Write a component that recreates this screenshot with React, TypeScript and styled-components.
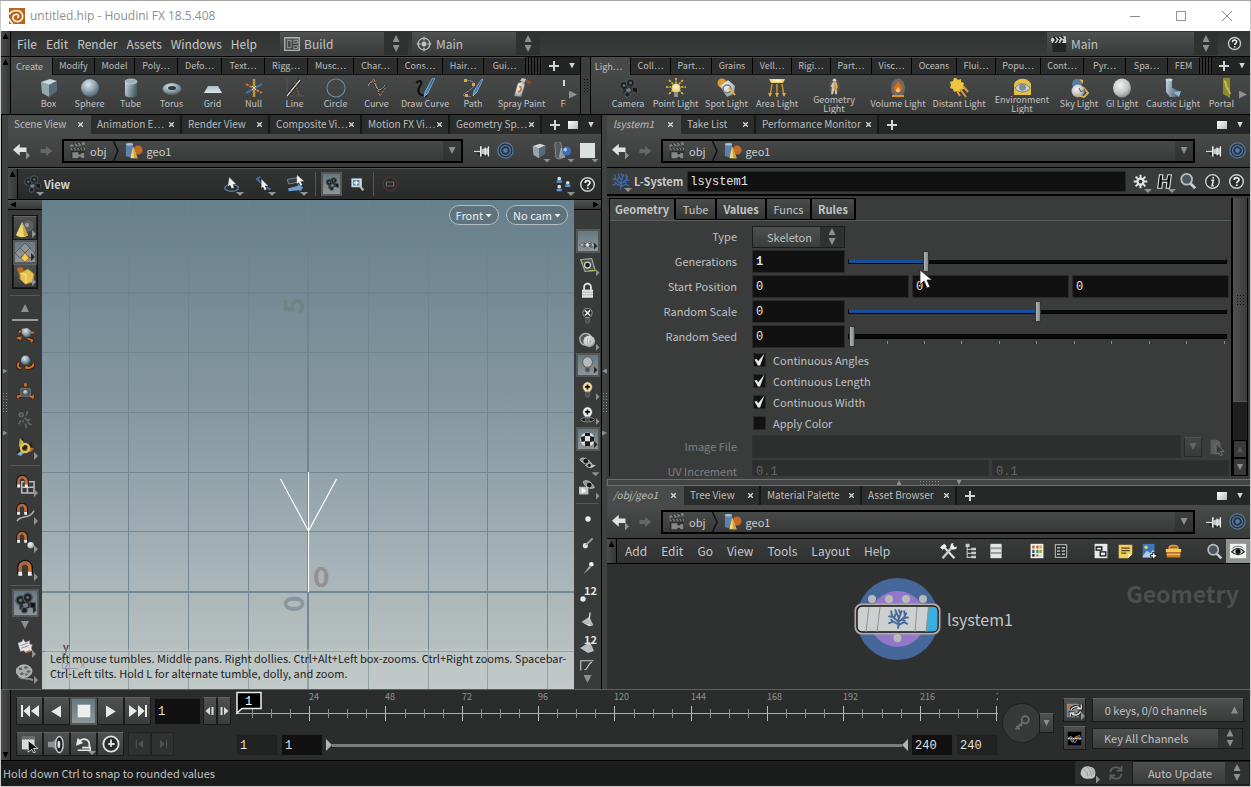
import React from 'react';
import styled, { createGlobalStyle, css } from 'styled-components';

const Global = createGlobalStyle`
  * { box-sizing: border-box; }
  body {
    margin: 0;
    background: #c9c9c9;
    color: #bfc1c1;
    font-family: 'Noto Sans CJK SC', 'Noto Sans', sans-serif;
    font-size: 11px;
    line-height: 14px;
  }
  button, input, select {
    font: inherit;
    color: inherit;
    margin: 0;
    padding: 0;
    border: 0;
    border-radius: 0;
    outline: 0;
    background: none;
  }
  svg { display: block; flex: none; }
`;

/* ---------- icons ---------- */

const HiddenDefs = styled.svg`
  position: absolute;
  width: 0;
  height: 0;
`;

const Defs = () => (
  <HiddenDefs aria-hidden="true">
    <defs>
      <radialGradient id="ball" cx="0.4" cy="0.3" r="0.75">
        <stop offset="0" stopColor="#dbe6ec" />
        <stop offset="0.5" stopColor="#93a7b1" />
        <stop offset="1" stopColor="#465660" />
      </radialGradient>
      <radialGradient id="white" cx="0.4" cy="0.35" r="0.75">
        <stop offset="0" stopColor="#f2f3f3" />
        <stop offset="0.6" stopColor="#c2c5c5" />
        <stop offset="1" stopColor="#70777a" />
      </radialGradient>
      <linearGradient id="steel" x1="0" y1="0" x2="1" y2="0.3">
        <stop offset="0" stopColor="#c8d8e0" />
        <stop offset="0.5" stopColor="#8a9ea8" />
        <stop offset="1" stopColor="#4c5d66" />
      </linearGradient>
      <linearGradient id="plate" x1="0" y1="0" x2="0" y2="1">
        <stop offset="0" stopColor="#aebdc4" />
        <stop offset="1" stopColor="#dfe6ea" />
      </linearGradient>
      <radialGradient id="lamp" cx="0.5" cy="0.4" r="0.6">
        <stop offset="0" stopColor="#fffbe0" />
        <stop offset="1" stopColor="#e9c64c" />
      </radialGradient>
      <linearGradient id="blue" x1="0" y1="0" x2="1" y2="0">
        <stop offset="0" stopColor="#5a9bd5" />
        <stop offset="1" stopColor="#1c4e86" />
      </linearGradient>
      <linearGradient id="sky" x1="0" y1="0" x2="0" y2="1">
        <stop offset="0" stopColor="#66808c" />
        <stop offset="0.45" stopColor="#8799a1" />
        <stop offset="0.75" stopColor="#a6b3b9" />
        <stop offset="0.8" stopColor="#acb7b9" />
        <stop offset="1" stopColor="#bdc6c4" />
      </linearGradient>
    </defs>
  </HiddenDefs>
);

const magnet = (
  <>
    <path d="M3 15V8a5.500 5.500 0 0 1 11 0v7" fill="none" stroke="#15100d" strokeWidth="5.500" />
    <path d="M3.500 13V8a5 5 0 0 1 10 0v5" fill="none" stroke="#a8664a" strokeWidth="4" />
    <path d="M11 4.500a5 5 0 0 1 2.500 4V12" fill="none" stroke="#d26f1c" strokeWidth="2.500" />
    <path d="M1.500 12.500h4v4h-4zM11.500 12.500h4v4h-4z" fill="#f2f2f2" />
  </>
);

const camera = (
  <>
    <circle cx="6" cy="7.500" r="4.200" fill="#1d2123" stroke="#4d5558" strokeWidth="1.200" />
    <circle cx="12.500" cy="5" r="4" fill="#1d2123" stroke="#4d5558" strokeWidth="1.200" />
    <circle cx="6" cy="7.500" r="1.500" fill="#5f6a6f" />
    <circle cx="12.500" cy="5" r="1.400" fill="#5f6a6f" />
    <path d="M5 11l8-3 3 5-7 4-4-1z" fill="#2b3134" />
    <path d="M8 11l4-1 1 3-4 2z" fill="#71808a" />
    <path d="M14 9l5.500 1v5l-4.500-1z" fill="#131617" stroke="#454c4f" />
    <circle cx="9.500" cy="16.500" r="2.700" fill="#1d2123" stroke="#596164" />
  </>
);

const tree = (color: string, w: number) => (
  <g fill="none" stroke={color} strokeWidth={w} strokeLinecap="round">
    <path d="M9.500 19c1-3 1-5 .5-9M10 11l3-8M10 9L7 2M9.800 13L4 8 3 3M4.500 8.300L1 8M10.300 13l5-4 2-4M14.500 9.500l4.500-.5M9.800 15.500L5 13l-4 1.500M5 13l-2-2M10.300 16l5-2.500 3 1.500M12 5.500L10.500 2M16 7l-.5-4M6 9.500L7 6M13 11l3 1" />
  </g>
);

const bulb = (fill: string, inner?: React.ReactNode) => (
  <>
    <path d="M10 1a6 6 0 0 1 5.800 6c0 2.500-1.800 4-2.600 6H6.800C6 11 4.200 9.500 4.200 7A6 6 0 0 1 10 1z" fill={fill} stroke="#3c3f40" strokeWidth="0.800" />
    <path d="M7.500 13.500h5v3.500a2.500 2 0 0 1-5 0z" fill="#4d5253" stroke="#6c7273" strokeWidth="0.800" />
    {inner}
  </>
);

const limb = (d: string) => (
  <>
    <path d={d} fill="none" stroke="#3a120b" strokeWidth="4" strokeLinejoin="round" />
    <path d={d} fill="none" stroke="#c86f28" strokeWidth="2.200" />
  </>
);

const icons: Record<string, React.ReactNode> = {
  box: (
    <>
      <path d="M2 4l9-3 7 2-8 4z" fill="#c9d8df" />
      <path d="M2 4l8 3v12l-7-4z" fill="#94a7b0" />
      <path d="M10 7l8-4v10l-8 6z" fill="#586a74" />
    </>
  ),
  sphere: <circle cx="10" cy="10" r="9" fill="url(#ball)" />,
  tube: (
    <>
      <path d="M4 3v14a6 2.500 0 0 0 12 0V3z" fill="url(#steel)" />
      <ellipse cx="10" cy="3.500" rx="6" ry="2.500" fill="#9fb1ba" stroke="#d5e0e6" strokeWidth="0.600" />
    </>
  ),
  torus: (
    <>
      <ellipse cx="10" cy="11" rx="9.500" ry="6" fill="url(#ball)" />
      <ellipse cx="10" cy="10" rx="4" ry="2" fill="#30383c" />
    </>
  ),
  grid: <path d="M5 8h10l4 7H1z" fill="url(#plate)" />,
  nul: (
    <>
      <path d="M10 1v18" stroke="#b89a3b" strokeWidth="2.500" />
      <path d="M2 15l16-9" stroke="#3f76b5" strokeWidth="2" />
      <path d="M2 6l16 9" stroke="#d27a3c" strokeWidth="1.800" strokeDasharray="3 1" />
      <path d="M8 8l4 4M12 8l-4 4" stroke="#e8d080" />
    </>
  ),
  line: (
    <>
      <path d="M2 1v17h17" fill="none" stroke="#5c5f60" strokeWidth="0.800" />
      <path d="M2 18L15 2" stroke="#15181a" strokeWidth="3.500" />
      <path d="M2 18L15 2" stroke="#d8dada" strokeWidth="1.300" />
      <path d="M5 13l5 2M10 4l4 13" stroke="#b66c33" strokeDasharray="1.500 1.500" />
    </>
  ),
  circle: <circle cx="10" cy="10" r="9" fill="none" stroke="#6b8fae" strokeWidth="1.100" />,
  curve: (
    <>
      <path d="M1 7C4 2 7 3 9 8s5 5 9-1" fill="none" stroke="#14181a" strokeWidth="2" />
      <path d="M1 8l6-7 6 17 6-9" fill="none" stroke="#c98a4a" strokeDasharray="2 1.500" />
      <path d="M1 7C4 2 7 3 9 8s5 5 9-1" fill="none" stroke="#d5d8d8" strokeWidth="0.800" />
    </>
  ),
  drawCurve: (
    <>
      <path d="M1 5c5-4 7-1 4 3s-3 10 7 10" fill="none" stroke="#0d0f10" strokeWidth="2" />
      <path d="M20 0l-3 1-7 13-1 5 4-4z" fill="url(#blue)" stroke="#a9cfee" strokeWidth="0.600" />
    </>
  ),
  path: (
    <>
      <path d="M2 2c14 1 10 7 2 12s-3 3 4 5" fill="none" stroke="#8a9092" strokeWidth="0.900" />
      <path d="M1 1h3v3H1zM9 5h3v3H9zM2 16h3v3H2z" fill="#e2a33c" />
      <path d="M20 1l-2 1-7 11-1 5 4-4z" fill="url(#blue)" stroke="#a9cfee" strokeWidth="0.600" />
    </>
  ),
  spray: (
    <>
      <path d="M6 5l6-2 1 4-4 12-7-1z" fill="url(#white)" stroke="#606060" strokeWidth="0.500" />
      <path d="M8 3l2-3 4 1-1 3z" fill="#c9c9c9" />
      <path d="M13 2l2-1 5 4-4 1z" fill="#9b4a28" />
      <path d="M7 9c3-2 3 5-1 5" fill="none" stroke="#d3642b" strokeWidth="1.500" />
    </>
  ),
  clipped: <path d="M3 2h2v6H3z" fill="#d8d8d8" />,
  camera,
  pointLight: (
    <>
      <path d="M10 0v5M0 9h5M15 9h5M3 2l4 4M17 2l-4 4M3 16l4-4M17 16l-4-4" stroke="#e8bd2f" strokeWidth="1.600" strokeDasharray="2.500 1" />
      <circle cx="10" cy="10" r="4.500" fill="url(#lamp)" />
      <path d="M8 14h4v5H8z" fill="#8a8f92" />
    </>
  ),
  spotLight: (
    <>
      <circle cx="5" cy="5" r="4.500" fill="#dc9a2a" />
      <path d="M3 8l8-6 7 6-1 8-7 3z" fill="url(#white)" />
      <circle cx="10" cy="11" r="4" fill="none" stroke="#6d7477" strokeWidth="1.500" />
      <path d="M12 10l6 7" stroke="#e6b23c" strokeWidth="1.800" />
    </>
  ),
  areaLight: (
    <>
      <path d="M2 1h16l-2 4H4z" fill="url(#lamp)" />
      <path d="M5 6L3 18M10 6v13M15 6l2 12" stroke="#c8922b" strokeWidth="1.500" />
      <path d="M1 15l2 4 2-4zM8 15l2 4 2-4zM15 15l2 4 2-4z" fill="#e0ab3c" />
    </>
  ),
  geometryLight: (
    <>
      <ellipse cx="10" cy="10" rx="6" ry="9.500" fill="#6b6152" opacity="0.600" />
      <circle cx="10" cy="2.500" r="2" fill="#d9d6cc" />
      <path d="M8 5h4l2 6-1.500 1 .5 7h-2l-1-6-2 6H6l1-8-1.500-1z" fill="#cbc8be" />
      <path d="M10 5l3 5-2 6-2-5z" fill="#e3962d" />
    </>
  ),
  volumeLight: (
    <>
      <ellipse cx="10" cy="10" rx="7" ry="9.500" fill="#70685f" />
      <path d="M10 2c0 4 5 5 4 10a4.500 4.500 0 0 1-8 0C5 8 9 7 10 2z" fill="#d96a1e" />
      <path d="M10 8c0 2 2.500 3 2 5a2.200 2.200 0 0 1-4 0c-.5-2 2-2 2-5z" fill="#f7d25c" />
      <path d="M4 17h12v2H4z" fill="#dc9333" />
    </>
  ),
  distantLight: (
    <>
      <path d="M7 0l2 2 3-1 0 3 3 1-1 3 1 3-3 1-1 2-3-1-3 1-1-3-3-1 1-3-1-3 3-1 1-3z" fill="#ecc63d" />
      <path d="M11 11l6 8M14 8l5 6M8 13l3 5" stroke="#d99a30" strokeWidth="2" />
    </>
  ),
  envLight: (
    <>
      <path d="M-1 11a11 10 0 0 1 22 0v9H-1z" fill="#e3bf45" />
      <path d="M1 12c5-7 13-7 18 0-5 6-13 6-18 0z" fill="#c9d0d2" stroke="#6d7477" />
      <circle cx="10" cy="11" r="4" fill="#7d8b92" />
    </>
  ),
  skyLight: (
    <>
      <circle cx="8" cy="6" r="5" fill="#557f9f" />
      <path d="M10 1l4 1 0 4z" fill="#e8b53b" />
      <circle cx="9" cy="13" r="6.500" fill="url(#white)" />
      <path d="M14 9l5 6-4 4-8-2" fill="none" stroke="#e0b454" strokeWidth="1.800" />
      <path d="M10 10l2 4 4-3" fill="none" stroke="#555" />
    </>
  ),
  giLight: <ellipse cx="10" cy="10" rx="9" ry="9.500" fill="url(#white)" />,
  causticLight: (
    <>
      <path d="M3 1h6v9l8 3-1 6-9 0-4-5z" fill="url(#steel)" />
      <ellipse cx="6" cy="1.800" rx="3.500" ry="1.300" fill="#c8d8e0" />
      <path d="M10 14l8-1-2 6z" fill="#8cbbe0" />
    </>
  ),
  portalLight: (
    <>
      <path d="M0 0h7v20l-7-4z" fill="#8a8c2e" />
      <path d="M1 3c4 2 0 6 4 8l2 5" fill="none" stroke="#d0b93c" strokeWidth="2" />
    </>
  ),
  layout: (
    <g fill="none" stroke="#b4b6b6" strokeWidth="1.500">
      <path d="M2 3h16v14H2z" />
      <path d="M5 6h4v8H5zM12 6h4v3h-4zM12 12h4v3h-4z" stroke="#8e9090" strokeWidth="1.200" />
    </g>
  ),
  desktop: (
    <>
      <circle cx="10" cy="10" r="6.500" fill="none" stroke="#b9bbbb" strokeWidth="1.500" />
      <circle cx="10" cy="10" r="2.800" fill="#c4c6c6" />
      <path d="M10 2v4M10 14v4M2 10h4M14 10h4" stroke="#b9bbbb" strokeWidth="1.500" />
    </>
  ),
  clapper: (
    <>
      <path d="M2 9h17v11H2z" fill="#2c2d2d" />
      <path d="M1 6l1-3L18 0l1 3-9 2H6z" fill="#7e8181" />
      <path d="M2 7h17v3H2z" fill="#767979" />
      <path d="M5 2l2 3M9 1l2 3M13 0l2 3M4 7l2 3M8 7l2 3M12 7l2 3M16 7l1 3" stroke="#2a2b2b" strokeWidth="1.500" />
      <path d="M4 12h7v2l2 1 2-2h3v6h-3l-2-2-2 1v1H4z" fill="#858888" />
    </>
  ),
  clapperBright: (
    <>
      <path d="M2 8h16v11H3z" fill="#232424" />
      <path d="M1 6l1-3L17 1l1 3-1 1h1v4H2V7z" fill="#d0d2d2" />
      <path d="M4 2l3 4M8 2l3 3M12 1l3 3M4 9l2-3M8 9l2-3M12 9l2-3" stroke="#161717" strokeWidth="1.800" />
    </>
  ),
  geo: (
    <>
      <path d="M1 2h8v13a4 2 0 0 1-8-1z" fill="#5d81a8" />
      <ellipse cx="5" cy="2.500" rx="4" ry="1.500" fill="#a3bfd8" />
      <circle cx="14.500" cy="9" r="5" fill="#c46c27" />
      <path d="M9 5l5 13H6z" fill="#f1d777" />
      <path d="M9 5l5 13h-4z" fill="#d3a23e" />
    </>
  ),
  back: <path d="M0 9l9-8v5h9v6H9v5z" fill="#dfe3e3" />,
  forward: <path d="M19 10l-9-7v4H2v6h8v4z" fill="#646767" />,
  pin: (
    <>
      <path d="M0 10.500h9" stroke="#e0e4e4" strokeWidth="1.300" />
      <path d="M4 13c3 2 7 3 13 3" fill="none" stroke="#202121" strokeWidth="2" />
      <path d="M8.500 4v13" stroke="#e9ecec" strokeWidth="2" />
      <path d="M9 8l5-1.500h4v8h-4L9 13z" fill="#bfc4c4" />
      <path d="M14 5.500v10M18 4v13" stroke="#e9ecec" strokeWidth="1.600" />
    </>
  ),
  target: (
    <>
      <circle cx="10" cy="10" r="9" fill="#27333f" stroke="#56789a" strokeWidth="1.500" />
      <circle cx="10" cy="10" r="5.800" fill="#27333f" stroke="#56789a" strokeWidth="1.500" />
      <circle cx="10" cy="10" r="2.800" fill="#4a7cb0" />
    </>
  ),
  shapes: (
    <>
      <path d="M1 3a3 3 0 0 1 7 0l2 11a4 3 0 0 1-8 3z" fill="#55595b" stroke="#8d9294" />
      <path d="M8 7l4 10H6z" fill="#8d9294" stroke="#ccd0d0" strokeWidth="0.600" />
      <circle cx="14" cy="10" r="5" fill="#3c6fae" />
      <circle cx="12.500" cy="8.500" r="2" fill="#a9c8ea" />
    </>
  ),
  help: (
    <>
      <circle cx="10" cy="10" r="8" fill="#2a2c2c" stroke="#c9cccc" strokeWidth="1.800" />
      <path d="M7.300 8.200c0-3.800 5.600-3.500 5.600-.4 0 2-2.600 2.200-2.600 4.200M10.300 13.500v1.900" fill="none" stroke="#f0f2f2" strokeWidth="2.100" />
    </>
  ),
  info: (
    <>
      <circle cx="10" cy="10" r="8" fill="#2f3131" stroke="#d6d9d9" strokeWidth="1.500" />
      <path d="M8.500 8.500h2.500l-1.500 6.500h2M11 4.500l-.3 2" fill="none" stroke="#e6e8e8" strokeWidth="1.800" />
    </>
  ),
  search: (
    <>
      <path d="M12 12l6 6" stroke="#cdd0d0" strokeWidth="3" />
      <circle cx="8.500" cy="8" r="6" fill="#4b5660" stroke="#b9bcbc" strokeWidth="2" />
    </>
  ),
  gear: (
    <>
      <path d="M10 1v18M1 10h18M3.500 3.500l13 13M16.500 3.500l-13 13" stroke="#e3e5e5" strokeWidth="2.600" />
      <circle cx="10" cy="10" r="5.500" fill="#e3e5e5" />
      <circle cx="10" cy="10" r="2.500" fill="#333" />
    </>
  ),
  hLetter: (
    <path d="M4 2h4l-.5 6h5L14 2h4l-2 16h-4l.8-7H7.500L7 18H2z" fill="#111" stroke="#dfe1e1" strokeWidth="1.300" />
  ),
  tree: tree('#3f6cab', 1.400),
  rotateTool: (
    <>
      <ellipse cx="9" cy="14" rx="8" ry="4" fill="none" stroke="#5f87ad" strokeWidth="1.500" />
      <path d="M6 1l9 9-4 0 1 4-3 1-2-4-3 2z" fill="#eceeee" stroke="#111" strokeWidth="0.600" />
    </>
  ),
  moveTool: (
    <>
      <path d="M1 3l6 6M12 13l5 3" stroke="#3d6fa8" strokeWidth="2.500" />
      <path d="M0 4l5-3" stroke="#3d6fa8" strokeWidth="2" />
      <path d="M6 3l9 9-4 0 2 4-3 1-2-4-2 2z" fill="#eceeee" stroke="#111" strokeWidth="0.600" />
    </>
  ),
  zoomTool: (
    <>
      <path d="M0 5l11-2 1 5-10 2z" fill="#3c3f40" stroke="#999" strokeWidth="0.800" />
      <path d="M1 15l11-3v-2l6 4-4 5v-2l-12 1z" fill="#6c9cc8" />
      <path d="M11 0l8 7-4 0 2 4-2 1-2-4-2 2z" fill="#eceeee" />
    </>
  ),
  boxZoom: (
    <>
      <path d="M3 3h13v11H3z" fill="#d7dadb" />
      <path d="M5 5h8v7H5z" fill="#4d8bbd" />
      <path d="M9 5.500v6M6 8.500h6" stroke="#fff" strokeWidth="1.500" />
      <path d="M13 12l5 6" stroke="#c3c6c6" strokeWidth="2.500" />
    </>
  ),
  noEntry: (
    <>
      <circle cx="10" cy="10" r="8.500" fill="#2d2828" stroke="#4d3432" strokeWidth="2" />
      <path d="M5.500 7.500h9v5h-9z" fill="none" stroke="#686868" strokeWidth="1.500" />
    </>
  ),
  tiles: (
    <>
      <circle cx="5" cy="3" r="2.200" fill="#cdd9e4" />
      <path d="M2 5h6v3H2z" fill="#5b93d0" />
      <circle cx="5" cy="12.500" r="2.200" fill="#cdd9e4" />
      <path d="M2 15h6v3H2z" fill="#5b93d0" />
      <circle cx="15" cy="8" r="2.200" fill="#cdd9e4" />
      <path d="M12 10h6v3h-6z" fill="#5b93d0" />
    </>
  ),
  selObject: (
    <>
      <circle cx="13" cy="8" r="5.500" fill="#5e6163" />
      <circle cx="12" cy="7" r="2" fill="#9a9d9e" />
      <path d="M7 4l6 13c-3 3-9 3-12 0z" fill="#ecd774" />
      <path d="M7 4l6 13-4 1z" fill="#c9a23a" />
    </>
  ),
  selComponent: (
    <>
      <path d="M10 1l5 5-5 5-5-5zM5 6l5 5-5 5-5-5zM15 6l5 5-5 5-5-5z" fill="#8d9294" stroke="#585d60" />
      <path d="M10 11l4 5-4 4-4-4z" fill="#f5d04a" stroke="#c06a1e" />
    </>
  ),
  selDynamic: (
    <>
      <path d="M2 2l5-1 2 4-5 4z" fill="#c46a26" />
      <path d="M5 7l8-4 6 5-1 8-8 2-5-5z" fill="#e5c353" stroke="#a8892a" />
      <path d="M5 7l6 2 0 9" fill="none" stroke="#fae58f" />
    </>
  ),
  handleTransform: (
    <>
      {limb('M5 5L3 7M15 7h4M1 13l5-1M2 12l3 2M12 13l5 2-1 2')}
      <path d="M6 3l6-1 4 3-1 6-5 1-4-4z" fill="url(#ball)" />
    </>
  ),
  handleRotate: (
    <>
      {limb('M3 9c-2 3-1 6 2 6M18 10c1 3-2 5-7 5M12 13l-2 2')}
      <circle cx="10" cy="6.500" r="4.800" fill="url(#ball)" />
    </>
  ),
  handleScale: (
    <>
      {limb('M10 5V1M8.500 3h3M6 14l-5 2M2 14v3M14 14l4 3M18 14v3')}
      <path d="M5 7h10v8H5z" fill="#4f5557" stroke="#7c8284" strokeWidth="0.800" />
      <circle cx="10" cy="11" r="2.600" fill="url(#ball)" />
    </>
  ),
  pose: (
    <g stroke="#636566" strokeWidth="1.800" fill="none">
      <circle cx="5.500" cy="5" r="2" />
      <path d="M12 1l-1 5M9 8l3 3 3-1M5 11l-2 4M12 13l4 3M10 14l1 5M8 11l-1 2" />
    </g>
  ),
  handles: (
    <>
      <path d="M5 1l3 8M8 9l9-1M8 10l-6 7" stroke="#262212" strokeWidth="4.500" />
      <path d="M4 0l4 4v5H3z" fill="#b3b04a" />
      <path d="M12 9l7 2-4 4-4-2z" fill="#c96b24" />
      <path d="M7 12l-6 5 4 2 4-4z" fill="#78b4d8" />
      <circle cx="9.500" cy="10.500" r="4.300" fill="none" stroke="#e8c34a" strokeWidth="2.500" />
    </>
  ),
  snapGrid: (
    <>
      <path d="M6 7h13v12H6zM6 13h13M12 7v12" fill="none" stroke="#b9bcbc" strokeWidth="1.600" />
      <g transform="scale(0.800)">{magnet}</g>
    </>
  ),
  snapCurve: (
    <>
      <path d="M1 19C5 12 14 18 19 8" fill="none" stroke="#aeb3b4" strokeWidth="1.500" />
      <g transform="scale(0.750)">{magnet}</g>
    </>
  ),
  snapPoint: (
    <>
      <circle cx="15.500" cy="15" r="3.500" fill="url(#white)" />
      <g transform="scale(0.750)">{magnet}</g>
    </>
  ),
  snapMulti: <g transform="translate(1 1)">{magnet}</g>,
  render: (
    <>
      <path d="M1 6l5-2 1-3 3 4 5-2v4l3 1-1 4 1 3-8 2-2-2-4 1z" fill="#e4e6e6" stroke="#6d7172" strokeWidth="0.600" />
      <path d="M4 9l9-3M5 12l9-3" stroke="#7b8183" />
      <path d="M10 17l6-2" stroke="#c96b24" strokeWidth="2" />
    </>
  ),
  flipbook: (
    <>
      <path d="M3 15c5 4 10 1 16 4" fill="none" stroke="#8d9293" strokeWidth="2" />
      <ellipse cx="9" cy="9" rx="8.800" ry="7" fill="#a9adae" stroke="#d0d3d3" strokeWidth="0.800" />
      <ellipse cx="5" cy="6.500" rx="2" ry="1.400" fill="#5b6061" />
      <ellipse cx="11" cy="5" rx="2" ry="1.400" fill="#5b6061" />
      <ellipse cx="14" cy="9.500" rx="2" ry="1.400" fill="#5b6061" />
      <ellipse cx="6.500" cy="12" rx="2" ry="1.400" fill="#5b6061" />
      <ellipse cx="11.500" cy="12.800" rx="1.500" ry="1.100" fill="#5b6061" />
    </>
  ),
  refPlane: (
    <>
      <path d="M0 14l10-5 10 5-10 5z" fill="#aab0b2" stroke="#63696b" />
      <path d="M5 14l5-3 5 3-5 3zM5 11.500l10 5M15 11.500l-10 5" fill="none" stroke="#3f4446" />
      <circle cx="10" cy="14" r="1.800" fill="#e8eaea" />
    </>
  ),
  constructPlane: (
    <>
      <path d="M2 3l13-1 4 14-12 1z" fill="#4e5252" stroke="#a5aa9b" strokeWidth="1.300" />
      <path d="M2 3l2 5M19 16l-7 0" stroke="#a9b33d" strokeWidth="1.500" />
      <circle cx="10" cy="9.500" r="3.500" fill="#1d1f1f" stroke="#cfd2d2" strokeWidth="1.500" />
    </>
  ),
  lock: (
    <>
      <path d="M6 10V6a4 4 0 0 1 8 0v4" fill="none" stroke="#e9ebeb" strokeWidth="2" />
      <path d="M3.500 9h13v9.500h-13z" fill="#e3e5e3" />
      <path d="M3.500 12h13M3.500 15h13" stroke="#a9adab" />
    </>
  ),
  noLight: bulb('#2a2c2c', (
    <>
      <circle cx="10" cy="7" r="5.500" fill="none" stroke="#8d9090" strokeWidth="1.200" />
      <path d="M7 4l6 6M13 4l-6 6" stroke="#e6e8e8" strokeWidth="1.800" />
    </>
  )),
  headlight: (
    <>
      <circle cx="8" cy="8.500" r="7" fill="#50585a" stroke="#b9bdbd" strokeWidth="1.500" />
      <circle cx="12" cy="11" r="7" fill="url(#white)" />
      <path d="M10 7v7M13 7v7M12 11h3" stroke="#9aa0a0" />
    </>
  ),
  light: bulb('#b5b9b9'),
  plusLight: bulb('#f1dc9a', <path d="M10 4v6M7 7h6" stroke="#111" strokeWidth="2" />),
  envBulb: (
    <>
      <ellipse cx="10" cy="16" rx="8" ry="2.500" fill="#111" stroke="#aaa" />
      {bulb('#eef0f0', <path d="M10 4v6M7 7h6" stroke="#111" strokeWidth="2" />)}
    </>
  ),
  checker: (
    <>
      <circle cx="10" cy="10" r="8.500" fill="#dde0e0" />
      <path d="M7 2h6v4H7zM2 7l5-1v6l-4 1zM13 6l5 1v5l-5 1zM7 12h6v6H7z" fill="#1b1d1d" />
    </>
  ),
  eyes: (
    <>
      <path d="M1 4c4-4 10 0 14 5-5 2-11 0-14-5z" fill="#8f9494" stroke="#c9cdcd" />
      <circle cx="8" cy="6" r="2.800" fill="#16181a" />
      <path d="M7 11c4-3 9-1 13 0-5 4-9 4-13 0z" fill="#c2c6c6" />
      <circle cx="12" cy="11" r="2" fill="#16181a" />
    </>
  ),
  eyesPlay: (
    <>
      <path d="M5 2c4-3 10 0 13 7-5 2-11 0-13-7z" fill="#8f9494" stroke="#c9cdcd" />
      <circle cx="12" cy="6" r="2.800" fill="#16181a" />
      <path d="M0 8h11v9H0z" fill="#bfc3c3" />
      <path d="M3 9.500l6 3-6 3z" fill="#fff" />
    </>
  ),
  dot: <circle cx="10" cy="10" r="2.700" fill="#f0f2f2" />,
  normals: (
    <>
      <circle cx="7.500" cy="12.500" r="3" fill="#dfe2e2" />
      <path d="M8 12l8-8" stroke="#a2a6a6" strokeWidth="2" />
    </>
  ),
  velocity: (
    <>
      <circle cx="14.500" cy="5" r="2.700" fill="#f0f2f2" />
      <path d="M13 6l-8 11 9-8z" fill="#a2a6a6" />
    </>
  ),
  pointNum: (
    <>
      <circle cx="5" cy="15" r="2.700" fill="#e6e8e8" />
      <text x="6" y="11" fontSize="11" fontWeight="700" fill="#e3e5e5" fontFamily="'Noto Sans CJK SC', sans-serif">12</text>
    </>
  ),
  primNum: (
    <>
      <path d="M2 14l10-6 4 9-6 2z" fill="#b9bdbd" />
      <text x="6" y="10" fontSize="11" fontWeight="700" fill="#e3e5e5" fontFamily="'Noto Sans CJK SC', sans-serif">12</text>
    </>
  ),
  primNormal: (
    <>
      <path d="M3 14l9-6 5 10z" fill="#b9bdbd" />
      <path d="M3 14l14 4-5 1z" fill="#dfe2e2" />
      <path d="M12 12l1-9" stroke="#dfe2e2" strokeWidth="1.500" />
    </>
  ),
  corner: <path d="M1 18V5h17M6 17c5 0 4-9 10-10" fill="none" stroke="#c9cccc" strokeWidth="1.500" />,
  wrench: (
    <>
      <path d="M4 4l13 14" stroke="#e3e5e5" strokeWidth="2.500" />
      <path d="M16 3L3 18" stroke="#c9cccc" strokeWidth="2.800" />
      <path d="M0 5l5-4 3 3-5 4z" fill="#f0f2f2" />
      <path d="M12 5l1-4 3-1-1 3 2 2 3-1-1 3-4 1z" fill="#f0f2f2" />
    </>
  ),
  hierarchy: (
    <>
      <path d="M4 2v16h5M4 8h5M4 13h5" fill="none" stroke="#b9bcbc" strokeWidth="1.500" />
      <path d="M2 1h5v4H2zM9 6h6v3H9zM9 11h6v3H9zM9 16h6v3H9z" fill="#c9cccc" />
    </>
  ),
  listView: (
    <>
      <path d="M3 1h14v18H3z" fill="#e3e7e5" />
      <path d="M3 6.500h14M3 12.500h14" stroke="#9b9f9f" strokeWidth="2.500" />
    </>
  ),
  palette: (
    <>
      <path d="M2 1h16v18H2z" fill="#f3f3ee" />
      <path d="M4 3h3v4H4zM9 3h3v4H9z" fill="#c4641f" />
      <path d="M13 3h3v4h-3z" fill="#e3a03b" />
      <path d="M4 8.500h3v4H4z" fill="#28588e" />
      <path d="M9 8.500h3v4H9z" fill="#4f8a4d" />
      <path d="M13 8.500h3v4h-3z" fill="#8fa63c" />
      <path d="M4 14h3v3H4z" fill="#111" />
      <path d="M9 14h3v3H9z" fill="#8a8a8a" />
      <path d="M13 14h3v3h-3z" fill="#d8d8d8" />
    </>
  ),
  table: (
    <>
      <path d="M3 2h14v16H3z" fill="#2b2d2d" stroke="#a6a9a9" strokeWidth="1.500" />
      <path d="M5 6h4M11 6h4M5 10h4M11 10h4M5 14h4M11 14h4" stroke="#b9bcbc" strokeWidth="2" />
    </>
  ),
  layoutBoxes: (
    <>
      <path d="M2 1h16v18H2z" fill="#e7ebe9" />
      <path d="M4 5h7v4H4zM9 11h7v5H9z" fill="#e7ebe9" stroke="#111" strokeWidth="1.600" />
    </>
  ),
  note: (
    <>
      <path d="M2 2h16v11l-5 5H2z" fill="#f0d05a" />
      <path d="M13 18v-5h5z" fill="#fff0b4" />
      <path d="M5 6h10M5 9h10M5 12h6" stroke="#54451a" strokeWidth="1.500" />
    </>
  ),
  image: (
    <>
      <path d="M2 1h14v16H2z" fill="#3a77b8" />
      <circle cx="6" cy="5" r="2" fill="#f0d05a" />
      <path d="M2 15l5-6 4 3 3-4 2 3v6H2z" fill="#a8cdea" />
      <path d="M15 11v8M11 15h8" stroke="#111" strokeWidth="3.500" />
      <path d="M15 12v6M12 15h6" stroke="#fff" strokeWidth="1.800" />
    </>
  ),
  basket: (
    <>
      <path d="M4 6c0-4 3-4 6-4s6 0 6 4v3H4z" fill="#d79a35" />
      <path d="M6 5h8" stroke="#6b4313" />
      <path d="M1 7h18v4H1z" fill="#f3c95a" />
      <path d="M2 11h16v6H2z" fill="#d07d27" />
      <path d="M2 13.500h16" stroke="#f0b94c" strokeWidth="1.500" />
    </>
  ),
  eye: (
    <>
      <path d="M1 2h18v16H1z" fill="#f2f2ee" />
      <path d="M3 11c4-5 10-5 14 0-4 4-10 4-14 0z" fill="#cfd2ce" stroke="#222" strokeWidth="1.300" />
      <circle cx="10" cy="10.500" r="2.800" fill="#111" />
      <path d="M4 7c4-3 9-3 12 0" fill="none" stroke="#555" />
    </>
  ),
  fileChooser: (
    <>
      <path d="M3 2h7l4 3v13H3z" fill="#808282" />
      <path d="M9 6l9 9h-4l2 4-2 1-2-4-3 2z" fill="#3a3a3a" stroke="#a9abab" />
    </>
  ),
  toStart: <path d="M1 4h2v12H1zM10 4v12L3.500 10zM19 4v12l-8-6z" fill="#e8eaea" />,
  playBack: <path d="M16 2v16L3 10z" fill="#e8eaea" />,
  stop: <path d="M3 3h14v14H3z" fill="#eceeee" />,
  play: <path d="M4 2v16l13-8z" fill="#e8eaea" />,
  toEnd: <path d="M17 4h2v12h-2zM10 4v12l6.500-6zM1 4v12l8-6z" fill="#e8eaea" />,
  stepBack: <path d="M1 10l9-8v16zM13 2h4v16h-4z" fill="#d8dada" />,
  stepFwd: <path d="M19 10l-9-8v16zM3 2h4v16H3z" fill="#d8dada" />,
  keyPrev: <path d="M3 3h2v14H3zM15 3v14l-8-7z" fill="#4c544e" />,
  keyNext: <path d="M15 3h2v14h-2zM5 3v14l8-7z" fill="#4c544e" />,
  realtime: (
    <>
      <path d="M1 2h14v14H1z" fill="#d9dbd6" />
      <path d="M1 2h14v3H1z" fill="#6b6e6c" />
      <path d="M8 6l11 9h-5l2 4-2 1-2-4-4 3z" fill="#111" stroke="#f0f0f0" strokeWidth="0.900" />
    </>
  ),
  audio: (
    <>
      <path d="M1 7h5l6-5v16l-6-5H1z" fill="#8d9294" />
      <ellipse cx="13" cy="10" rx="4" ry="8.500" fill="#1d1f20" stroke="#c9cccc" strokeWidth="1.500" />
      <ellipse cx="12.500" cy="10" rx="1.500" ry="4" fill="#e1e4e4" />
    </>
  ),
  loop: (
    <>
      <path d="M3 17h14v-3H8" fill="none" stroke="#e8eaea" strokeWidth="1.800" />
      <path d="M16 14v-3c0-7-8-8-11-4" fill="none" stroke="#e8eaea" strokeWidth="2" />
      <path d="M1 12l2-9 6 6z" fill="#e8eaea" />
    </>
  ),
  clock: (
    <>
      <circle cx="10" cy="10" r="8.500" fill="#2b2d2d" stroke="#e3e5e5" strokeWidth="2" />
      <path d="M10 5v8M7 10h7" stroke="#e3e5e5" strokeWidth="2" />
    </>
  ),
  key: (
    <g fill="none" stroke="#6f7171" strokeWidth="2.200">
      <circle cx="14" cy="6" r="4.500" />
      <path d="M11 9l-9 9M3 14l4 4M7 11l3 3" />
    </g>
  ),
  scope: (
    <>
      <path d="M1 2h14v16H1z" fill="#8a8d8d" />
      <path d="M2 5h4v3H2z" fill="#c9692a" />
      <path d="M2 10h4v3H2z" fill="#3f76b5" />
      <path d="M6 9a6 5 0 0 1 10-2M17 11a6 5 0 0 1-10 3M13 8h5V3M10 13H5v4" fill="none" stroke="#111" strokeWidth="3.500" />
      <path d="M6 9a6 5 0 0 1 10-2M17 11a6 5 0 0 1-10 3M13 8h5V3M10 13H5v4" fill="none" stroke="#e3e5e5" strokeWidth="1.600" />
    </>
  ),
  channels: (
    <>
      <path d="M1 1h18v18H1z" fill="#000" />
      <path d="M1 10h18" stroke="#f1eec0" strokeWidth="1.800" />
      <path d="M2 12c2-6 4-6 6 0s4 3 6-3 3-3 4 1" fill="none" stroke="#4f86c4" strokeWidth="1.400" />
      <path d="M2 9c3-2 4 8 6 5s3-8 6-6 3 5 4 3" fill="none" stroke="#d07a2c" strokeWidth="1.400" />
    </>
  ),
  brain: (
    <>
      <path d="M2 12C1 5 7 1 12 3c5 0 7 5 6 9 0 3-3 5-6 4-4 1-7 1-10-4z" fill="#c2c7c4" />
      <path d="M5 6c3 1 5 4 5 8M9 4c3 1 4 4 5 10M13 4c2 2 3 4 3 8" fill="none" stroke="#8b918e" />
    </>
  ),
  refresh: (
    <path d="M3 9c1-7 10-8 13-3M17 1v6h-6M17 11c-1 7-10 8-13 3M3 19v-6h6" fill="none" stroke="#5d6060" strokeWidth="2.200" />
  ),
  logo: (
    <>
      <path d="M0 0h20v20H0z" fill="#b8621b" />
      <path d="M0 8C4 2 15 1 17 9c1 6-5 10-10 7-4-3-2-9 3-8 3 1 2 4 0 4M0 13c1 3 2 5 5 7" fill="none" stroke="#f7ead9" strokeWidth="2.200" />
    </>
  ),
};

const Icon = ({ name, size = 20 }: { name: string; size?: number }) => (
  <svg width={size} height={size} viewBox="0 0 20 20" aria-hidden="true">
    {icons[name]}
  </svg>
);

const Tri = styled.span<{ $dir?: 'up' | 'down' | 'left' | 'right'; $c?: string; $s?: number }>`
  display: block;
  flex: none;
  width: ${p => (p.$s ?? 8)}px;
  height: ${p => (p.$s ?? 8)}px;
  background: ${p => p.$c ?? '#8d9090'};
  clip-path: ${p =>
    p.$dir === 'up' ? 'polygon(50% 0, 100% 100%, 0 100%)'
    : p.$dir === 'left' ? 'polygon(0 50%, 100% 0, 100% 100%)'
    : p.$dir === 'right' ? 'polygon(100% 50%, 0 0, 0 100%)'
    : 'polygon(0 0, 100% 0, 50% 100%)'};
`;

/* ---------- shared parts ---------- */

const raised = css`
  background: linear-gradient(#4f5151, #3a3b3b);
  border: 1px solid #1b1b1b;
  border-top-color: #626464;
`;

const lit = css`
  background: linear-gradient(#647883, #8d9699);
  border: 2px solid #565858;
`;

const ToolBtn = styled.button<{ $w: number; $h?: number; $on?: boolean; $menu?: 'down' | 'right'; $raised?: boolean; $off?: boolean }>`
  position: relative;
  display: flex;
  align-items: center;
  justify-content: center;
  flex: none;
  width: ${p => p.$w}px;
  height: ${p => p.$h ?? 24}px;
  ${p => p.$raised && raised}
  ${p => p.$off && 'background: #303131; border-color: #222;'}
  ${p => p.$on && lit}
  ${p => p.$menu && css`
    &::after {
      content: '';
      position: absolute;
      right: 0;
      bottom: ${p.$menu === 'down' ? 0 : 1}px;
      width: ${p.$menu === 'down' ? 8 : 4}px;
      height: ${p.$menu === 'down' ? 4 : 8}px;
      background: ${p.$on ? '#2a2a2a' : '#8f9292'};
      clip-path: ${p.$menu === 'down' ? 'polygon(0 0, 100% 0, 50% 100%)' : 'polygon(0 0, 100% 50%, 0 100%)'};
    }
  `}
`;

const Tool = ({ icon, label, w = 24, h, on, menu, raisedLook, off, size }: {
  icon: string; label: string; w?: number; h?: number; on?: boolean; menu?: 'down' | 'right'; raisedLook?: boolean; off?: boolean; size?: number;
}) => (
  <ToolBtn type="button" aria-label={label} title={label} $w={w} $h={h} $on={on} $menu={menu} $raised={raisedLook} $off={off}>
    <Icon name={icon} size={size} />
  </ToolBtn>
);

const Spacer = styled.div`flex: 1;`;

const Gap = styled.span<{ $w: number }>`
  flex: none;
  width: ${p => p.$w}px;
`;

const SpinMark = styled.span`
  display: flex;
  flex-direction: column;
  gap: 3px;
  align-items: center;
  justify-content: center;
  flex: none;
  width: 24px;
  align-self: stretch;
  background: #303131;
  pointer-events: none;
`;

const Combo = styled.span<{ $w: number; $h: number; $flat?: boolean; $indent?: number }>`
  display: flex;
  align-items: center;
  flex: none;
  width: ${p => p.$w}px;
  height: ${p => p.$h}px;
  ${raised}
  border-color: #1d1d1d;
  ${p => p.$flat && 'border: 0;'}
  padding-left: ${p => p.$indent ?? 3}px;
`;

const Select = styled.select<{ $fs?: number }>`
  appearance: none;
  flex: 1;
  min-width: 0;
  height: 18px;
  line-height: 18px;
  font-size: ${p => p.$fs ?? 11}px;
  padding-left: 3px;
`;

const Spin = () => (
  <SpinMark>
    <Tri $dir="up" $s={7} />
    <Tri $dir="down" $s={7} />
  </SpinMark>
);

const DropDown = ({ id, icon, label, value, w, h, fs, flat, indent }: {
  id?: string; icon?: string; label: string; value: string; w: number; h: number; fs?: number; flat?: boolean; indent?: number;
}) => (
  <Combo $w={w} $h={h} $flat={flat} $indent={indent}>
    {icon && <Icon name={icon} size={18} />}
    <Select id={id} aria-label={label} defaultValue={value} $fs={fs}><option>{value}</option></Select>
    <Spin />
  </Combo>
);

const Grip = styled.button<{ $w: number }>`
  flex: none;
  width: ${p => p.$w}px;
  align-self: stretch;
  display: flex;
  justify-content: center;
  align-items: flex-start;
  padding-top: 2px;
  background: linear-gradient(90deg, #4b4d4d, #353636);
  border-right: 1px solid #000;
`;

const Dots = styled.span<{ $w: number; $h: number; $c?: string }>`
  display: block;
  flex: none;
  width: ${p => p.$w}px;
  height: ${p => p.$h}px;
  background: radial-gradient(circle, ${p => p.$c ?? '#8a8c8c'} 1px, transparent 1px) 0 0 / 3px 3px;
`;

/* ---------- window ---------- */

const Window = styled.div`
  display: flex;
  flex-direction: column;
  height: 100vh;
  min-height: 780px;
  min-width: 1100px;
  margin: 0;
  padding: 0 1px 1px;
  border-top: 1px solid #a3a3a3;
`;

const TitleBar = styled.header`
  display: flex;
  align-items: center;
  flex: none;
  height: 30px;
  padding-left: 8px;
  background: #fff;
  color: #8f8f8f;
  font-family: 'Open Sans', sans-serif;
  font-size: 12px;
`;

const WinBtn = styled.button`
  width: 46px;
  height: 29px;
  display: grid;
  place-items: center;
`;

const WinGlyph = ({ d }: { d: string }) => (
  <svg width="12" height="12" viewBox="0 0 12 12"><path d={d} fill="none" stroke="#8c8c8c" /></svg>
);

const Bar = styled.div<{ $h: number }>`
  display: flex;
  align-items: center;
  flex: none;
  height: ${p => p.$h}px;
  background: linear-gradient(#313232, #3b3c3c);
  border-bottom: 1px solid #000;
`;

const MenuList = styled.nav<{ $gap: number; $pad: number }>`
  display: flex;
  gap: ${p => p.$gap}px;
  padding-left: ${p => p.$pad}px;
`;

const MenuLink = styled.button`
  font-size: 12px;
  line-height: 18px;
  color: #c6c8c8;
`;

const ComboRow = styled.div`
  display: flex;
  align-items: center;
  gap: 4px;
  margin-left: 23px;
`;

/* ---------- shelves ---------- */

const Shelves = styled.div`
  display: grid;
  grid-template-columns: 10px minmax(0, 569fr) 11px minmax(0, 659fr);
  flex: none;
  height: 58px;
  border-bottom: 1px solid #000;
`;

const ShelfGrip = styled.div`
  display: grid;
  place-items: center;
  background: #3c3d3d;
  border: solid #000;
  border-width: 0 1px;
`;

const Shelf = styled.section`
  display: flex;
  flex-direction: column;
  min-width: 0;
  overflow: hidden;
`;

const ShelfTabs = styled.div`
  display: flex;
  height: 18px;
  flex: none;
  background: #232424;
  border-bottom: 1px solid #111;
  align-items: stretch;
`;

const ShelfTab = styled.button<{ $w: number; $on?: boolean }>`
  flex: none;
  width: ${p => p.$w}px;
  font-size: 9px;
  line-height: 16px;
  border-right: 1px solid #000;
  border-top: 1px solid #4e5050;
  background: #2b2c2c;
  color: #bcbebe;
  overflow: hidden;
  white-space: nowrap;
  ${p => p.$on && 'background: #474949; margin-bottom: -1px; padding-right: 4px;'}
`;

const Stripes = styled.span<{ $w: number }>`
  width: ${p => p.$w}px;
  background: repeating-linear-gradient(90deg, #2f3030 0 2px, #000 2px 3px);
`;

const TabEnd = styled.div<{ $gap: number }>`
  flex: 1;
  display: flex;
  align-items: center;
  justify-content: flex-end;
  gap: ${p => p.$gap}px;
  padding-right: 5px;
`;

const Plus = styled.button`
  width: 10px;
  height: 10px;
  background: linear-gradient(#d3d5d5, #d3d5d5) center / 10px 2px no-repeat, linear-gradient(#d3d5d5, #d3d5d5) center / 2px 10px no-repeat;
`;

const ShelfBody = styled.div<{ $pad: number }>`
  flex: 1;
  display: flex;
  padding-left: ${p => p.$pad}px;
  background: linear-gradient(#474949, #3a3b3b);
  min-width: 0;
`;

const ShelfItems = styled.div`
  flex: 1;
  display: flex;
  min-width: 0;
  overflow: hidden;
`;

const ShelfTool = styled.button<{ $w: number; $tall?: boolean }>`
  flex: none;
  width: ${p => p.$w}px;
  display: flex;
  flex-direction: column;
  align-items: center;
  justify-content: flex-start;
  padding-top: 3px;
  font-size: 9px;
  line-height: ${p => (p.$tall ? 9 : 12)}px;
  color: #c0c2c2;
  white-space: nowrap;
`;

const ShelfMore = styled.button`
  width: 14px;
  display: grid;
  place-items: center;
  flex: none;
`;

const leftTabs: [string, number][] = [
  ['Create', 42], ['Modify', 42], ['Model', 40], ['Poly…', 43], ['Defo…', 44], ['Text…', 43], ['Rigg…', 43],
  ['Musc…', 46], ['Char…', 44], ['Cons…', 45], ['Hair…', 41], ['Gui…', 42],
];
const rightTabs: [string, number][] = [
  ['Ligh…', 40], ['Coll…', 40], ['Part…', 41], ['Grains', 41], ['Vell…', 39], ['Rigi…', 39], ['Part…', 41], ['Visc…', 40],
  ['Oceans', 45], ['Flui…', 39], ['Popu…', 45], ['Cont…', 43], ['Pyr…', 42], ['Spa…', 42], ['FEM', 32],
];
const leftTools: [string, string, number][] = [
  ['Box', 'box', 41], ['Sphere', 'sphere', 41], ['Tube', 'tube', 41], ['Torus', 'torus', 41], ['Grid', 'grid', 41],
  ['Null', 'nul', 41], ['Line', 'line', 41], ['Circle', 'circle', 41], ['Curve', 'curve', 41], ['Draw Curve', 'drawCurve', 56],
  ['Path', 'path', 40], ['Spray Paint', 'spray', 57], ['Font', 'clipped', 40],
];
const rightTools: [string, string, number][] = [
  ['Camera', 'camera', 46], ['Point Light', 'pointLight', 49], ['Spot Light', 'spotLight', 53], ['Area Light', 'areaLight', 48],
  ['Geometry\nLight', 'geometryLight', 66], ['Volume Light', 'volumeLight', 62], ['Distant Light', 'distantLight', 60],
  ['Environment\nLight', 'envLight', 66], ['Sky Light', 'skyLight', 48], ['GI Light', 'giLight', 38],
  ['Caustic Light', 'causticLight', 64], ['Portal Light', 'portalLight', 56],
];

const ShelfSet = ({ tabs, tools, pad, stripes }: {
  tabs: [string, number][]; tools: [string, string, number][]; pad: number; stripes: number;
}) => (
  <Shelf>
    <ShelfTabs>
      {tabs.map(([t, w], i) => <ShelfTab key={i} type="button" $w={w} $on={i === 0}>{t}</ShelfTab>)}
      <Stripes $w={stripes} />
      <TabEnd $gap={10}>
        <Plus type="button" aria-label="Add shelf" />
        <Tri $s={6} $c="#d3d5d5" />
      </TabEnd>
    </ShelfTabs>
    <ShelfBody $pad={pad}>
      <ShelfItems>
        {tools.map(([t, icon, w]) => (
          <ShelfTool key={t} type="button" $w={w} $tall={t.includes('\n')}>
            <Icon name={icon} size={t.includes('\n') ? 17 : 20} />
            {t.split('\n').map(l => <span key={l}>{l}</span>)}
          </ShelfTool>
        ))}
      </ShelfItems>
      <ShelfMore type="button" aria-label="More tools"><Tri $dir="right" $s={8} /></ShelfMore>
    </ShelfBody>
  </Shelf>
);

/* ---------- panes ---------- */

const Main = styled.main`
  flex: 1;
  min-height: 0;
  display: grid;
  grid-template-columns: 7px minmax(0, 593fr) 6px minmax(0, 643fr);
  grid-template-rows: minmax(0, 1fr);
`;

const Splitter = styled.div`
  display: flex;
  flex-direction: column;
  align-items: center;
  justify-content: center;
  gap: 18px;
  background: #404141;
  border-left: 1px solid #000;
`;

const Pane = styled.section`
  display: flex;
  flex-direction: column;
  min-width: 0;
  min-height: 0;
  background: #3a3b3b;
`;

const PaneTabs = styled.div`
  display: flex;
  flex: none;
  height: 19px;
  background: #262727;
`;

const PaneTab = styled.div<{ $w: number; $on?: boolean; $it?: boolean }>`
  display: flex;
  align-items: center;
  flex: none;
  width: ${p => p.$w}px;
  padding: 0 6px 0 6px;
  font-size: 10px;
  color: #bbbdbd;
  border-right: 2px solid #161717;
  background: #2c2d2d;
  button:first-child {
    flex: 1;
    min-width: 0;
    text-align: left;
    white-space: nowrap;
    line-height: 16px;
    padding-bottom: 2px;
    ${p => p.$it && 'font-style: italic;'}
  }
  ${p => p.$on && 'background: #494b4b; border-right-color: #494b4b;'}
`;

const Close = styled.button`
  width: 6px;
  height: 12px;
  display: grid;
  place-items: center;
`;

const AfterTabs = styled.div<{ $pad: number }>`
  flex: 1;
  display: flex;
  align-items: center;
  padding: 0 7px 0 ${p => p.$pad}px;
`;

const Maximize = styled.button`
  width: 10px;
  height: 8px;
  margin-right: 10px;
  background: linear-gradient(135deg, #fff, #b9bcbc);
`;

const TabStrip = ({ tabs, pad, italic }: { tabs: [string, number][]; pad: number; italic?: boolean }) => (
  <PaneTabs>
    {tabs.map(([t, w], i) => (
      <PaneTab key={t} $w={w} $on={i === 0} $it={italic && i === 0}>
        <button type="button">{t}</button>
        <Close type="button" aria-label={`Close ${t}`}>
          <svg width="5" height="5" viewBox="0 0 5 5"><path d="M0 0l5 5M5 0L0 5" stroke="#d6d8d8" strokeWidth="1.300" /></svg>
        </Close>
      </PaneTab>
    ))}
    <AfterTabs $pad={pad}>
      <Plus type="button" aria-label="Add tab" />
      <Spacer />
      <Maximize type="button" aria-label="Maximize pane" />
      <Tri $s={6} $c="#d3d5d5" />
    </AfterTabs>
  </PaneTabs>
);

const PathRow = styled.div`
  display: flex;
  align-items: center;
  flex: none;
  height: 34px;
  padding: 0 2px 0 2px;
  background: linear-gradient(#494b4b, #393a3a);
  border-bottom: 1px solid #000;
`;

const PathBox = styled.div`
  flex: 1;
  display: flex;
  align-items: center;
  height: 24px;
  margin: 0 7px 0 4px;
  border: 2px solid #000;
  background: linear-gradient(#484a4a, #383939);
  overflow: hidden;
`;

const Crumb = styled.button`
  display: flex;
  align-items: center;
  gap: 4px;
  padding: 0 5px 0 5px;
  color: #ccc;
`;

const Chevron = () => (
  <svg width="8" height="22" viewBox="0 0 8 22"><path d="M1 0l5 11-5 11" fill="none" stroke="#111" strokeWidth="1.500" /></svg>
);

const PathMenu = styled.button`
  width: 18px;
  align-self: stretch;
  display: grid;
  place-items: center;
  background: linear-gradient(#3b3c3c, #303131);
`;

const PathBar = ({ children }: { children?: React.ReactNode }) => (
  <PathRow>
    <Tool icon="back" label="Back" menu="right" size={15} w={20} h={20} />
    <Gap $w={4} />
    <Tool icon="forward" label="Forward" size={14} w={24} h={20} />
    <PathBox>
      <Crumb type="button"><Icon name="clapper" size={17} />obj</Crumb>
      <Chevron />
      <Crumb type="button"><Icon name="geo" size={18} />geo1</Crumb>
      <Spacer />
      <PathMenu type="button" aria-label="Path history"><Tri $s={7} /></PathMenu>
    </PathBox>
    <Tool icon="pin" label="Pin" size={16} />
    <Tool icon="target" label="Link" size={17} w={22} />
    {children}
  </PathRow>
);

const ViewExtras = styled.div`
  display: flex;
  margin-left: 11px;
`;

const Swatch = styled.span`
  width: 15px;
  height: 15px;
  background: #dbe1e1;
`;

/* ---------- scene view ---------- */

const ViewBar = styled.div`
  display: flex;
  align-items: center;
  flex: none;
  height: 32px;
  background: linear-gradient(#333434, #282929);
  border-top: 1px solid #555;
  border-bottom: 1px solid #000;
`;

const ViewTitle = styled.div`
  display: flex;
  align-items: center;
  width: 202px;
  padding-left: 2px;
  font-weight: 700;
  color: #d2d4d4;
`;

const ToolRow = styled.div<{ $gap: number }>`
  display: flex;
  align-items: center;
  gap: ${p => p.$gap}px;
`;

const VSep = styled.span`
  width: 1px;
  height: 24px;
  background: #565858;
`;

const ViewArea = styled.div`
  flex: 1;
  min-height: 0;
  display: grid;
  grid-template-columns: 34px minmax(0, 1fr) 27px;
  grid-template-rows: minmax(0, 1fr);
`;

const SideBar = styled.div`
  display: flex;
  flex-direction: column;
  align-items: center;
  overflow: hidden;
  background: #393a3a;
`;

const SideHandle = styled.button<{ $end?: boolean }>`
  flex: none;
  align-self: stretch;
  height: 10px;
  display: flex;
  align-items: center;
  justify-content: ${p => (p.$end ? 'flex-end' : 'flex-start')};
  padding: 0 2px;
  background: linear-gradient(#515353, #363737);
  border-bottom: 1px solid #000;
`;

const HSep = styled.span<{ $m: number }>`
  flex: none;
  align-self: stretch;
  height: 1px;
  margin: ${p => p.$m}px 2px;
  background: #565858;
`;

const SelectGroup = styled.div`
  display: flex;
  flex-direction: column;
  flex: none;
  width: 26px;
  margin: 5px 0;
  border: 1px solid #111;
`;

const ScrollUp = styled.button`
  flex: none;
  width: 26px;
  height: 24px;
  padding-top: 7px;
  display: flex;
  flex-direction: column;
  align-items: center;
  border-bottom: 2px solid #9a9d9d;
`;

const ScrollDown = styled.button<{ $h: number }>`
  flex: none;
  height: ${p => p.$h}px;
  display: grid;
  place-items: center;
`;

const DisplayGroup = styled.div`
  display: flex;
  flex-direction: column;
  justify-content: space-between;
  flex: none;
  height: 272px;
  margin-top: 19px;
`;

const Viewport = styled.div`
  position: relative;
  overflow: hidden;
  background: #8d9da4;
`;

const Scene = styled.svg`
  width: 100%;
  height: 100%;
`;

const ViewPills = styled.div`
  position: absolute;
  top: 5px;
  right: 6px;
  display: flex;
  gap: 7px;
`;

const Pill = styled.button`
  display: flex;
  align-items: center;
  gap: 2px;
  height: 20px;
  padding: 0 6px 1px;
  line-height: 16px;
  color: #e9eded;
  border: 1px solid #b3bdc2;
  border-radius: 10px;
  background: rgba(90, 105, 115, 0.6);
`;

const CaretDown = styled.span`
  width: 7px;
  height: 4px;
  margin-top: 2px;
  background: #eee;
  clip-path: polygon(0 0, 100% 0, 50% 100%);
`;

const Hint = styled.p`
  position: absolute;
  left: 3px;
  right: 0;
  bottom: 0;
  margin: 0;
  padding: 2px 0 8px 5px;
  font-size: 11px;
  line-height: 15px;
  white-space: nowrap;
  color: #1f2222;
  background: rgba(200, 208, 206, 0.35);
`;

const xs = [27, 86, 146, 206, 326, 386, 445, 505];
const ys = [32, 152, 212, 272, 331, 451];

const SceneView = () => (
  <Viewport>
    <Scene viewBox="0 0 532 489" preserveAspectRatio="xMidYMid slice">
      <rect width="532" height="489" fill="url(#sky)" />
      <g stroke="#6f838f" strokeWidth="1" shapeRendering="crispEdges" opacity="0.900">
        {xs.map(x => <path key={x} d={`M${x}.5 0v489`} />)}
        {ys.map(y => <path key={y} d={`M0 ${y}.5h532`} />)}
        <path d="M266 0v489M0 93h532M0 392h532" strokeWidth="2" />
      </g>
      <g fontFamily="'Noto Sans CJK SC', sans-serif" fontWeight="700" fontSize="28">
        <text transform="translate(262 114) rotate(-90)" x="0" y="0" fill="#6d8480">5</text>
        <text transform="translate(262 412) rotate(-90)" x="0" y="0" fill="#8796a0">0</text>
        <text x="271" y="387" fill="#978f92">0</text>
      </g>
      <g fill="none" stroke="#fff">
        <path d="M266.500 272v120" strokeWidth="1.200" />
        <path d="M238.500 279l28 52 28-52" strokeWidth="1.200" />
      </g>
      <g fontFamily="'Noto Sans CJK SC', sans-serif" fontSize="11">
        <path d="M20.500 452v16.500h16" fill="none" stroke="#8b8080" />
        <text x="21" y="451" fill="#111">y</text>
        <text x="22" y="469" fill="#6a5fb0">z</text>
        <text x="38" y="468" fill="#a07c7e">x</text>
      </g>
    </Scene>
    <ViewPills>
      <Pill type="button">Front<CaretDown /></Pill>
      <Pill type="button">No cam<CaretDown /></Pill>
    </ViewPills>
    <Hint>
      Left mouse tumbles. Middle pans. Right dollies. Ctrl+Alt+Left box-zooms. Ctrl+Right zooms. Spacebar-<br />
      Ctrl-Left tilts. Hold L for alternate tumble, dolly, and zoom.
    </Hint>
  </Viewport>
);

/* ---------- parameters ---------- */

const ParamHeader = styled.div`
  display: flex;
  align-items: center;
  flex: none;
  height: 28px;
  padding: 0 2px 0 3px;
  border-bottom: 2px solid #000;
`;

const NodeType = styled.label`
  font-weight: 700;
  font-size: 11px;
  color: #c9cbcb;
  margin: 0 4px 0 2px;
`;

const field = css`
  font-family: 'Liberation Mono', monospace;
  font-size: 12px;
  color: #e1e3e3;
  background: #111;
  border: 1px solid #2a2a2a;
  padding: 1px 3px 0;
  min-width: 0;
`;

const NodeName = styled.input`
  ${field}
  flex: 1;
  height: 21px;
  padding: 1px 2px 0;
  margin-right: 2px;
`;

const ParamBody = styled.div`
  flex: 1;
  min-height: 0;
  display: grid;
  grid-template-columns: minmax(0, 1fr) 15px;
  padding: 2px 2px 3px 2px;
`;

const ParamScroll = styled.div`
  display: flex;
  flex-direction: column;
  min-height: 0;
  overflow: hidden;
  border-left: 1px solid #000;
  border-right: 2px solid #000;
`;

const FolderTabs = styled.div`
  display: flex;
  flex: none;
  height: 22px;
`;

const FolderTab = styled.button<{ $w: number; $on?: boolean; $bold?: boolean }>`
  width: ${p => p.$w}px;
  border: solid #000;
  border-width: 1px 2px 1px 0;
  background: ${p => (p.$on ? '#454646' : 'linear-gradient(#4a4c4c, #333434)')};
  ${p => p.$on && 'border-bottom-color: #454646;'}
  font-weight: ${p => (p.$bold ? 700 : 400)};
  line-height: 18px;
  color: #c3c5c5;
`;

const Folder = styled.div`
  flex: 1;
  min-height: 0;
  overflow: hidden;
  border-top: 1px solid #5b5d5d;
  padding: 3px 2px 0 0;
`;

const Row = styled.div<{ $off?: boolean }>`
  display: grid;
  grid-template-columns: 127px minmax(0, 1fr);
  column-gap: 15px;
  align-items: center;
  height: 25px;
  ${p => p.$off && 'opacity: 0.5;'}
  > label { text-align: right; padding-bottom: 1px; }
`;

const Fields = styled.div<{ $gap?: number }>`
  display: flex;
  align-items: center;
  gap: ${p => p.$gap ?? 3}px;
  min-width: 0;
`;

const FieldSlot = styled.div`
  position: relative;
  flex: 1;
  display: flex;
  min-width: 0;
`;

const Field = styled.input<{ $w?: number; $bold?: boolean; $off?: boolean }>`
  ${field}
  height: 23px;
  ${p => (p.$w ? `flex: none; width: ${p.$w}px;` : 'flex: 1; width: 0;')}
  ${p => p.$bold && 'font-weight: 700;'}
  ${p => p.$off && 'background: #222323; color: #8c8e8e;'}
`;

const SliderBox = styled.div<{ $ticks?: boolean }>`
  position: relative;
  flex: 1;
  height: 22px;
  margin-right: 2px;
  display: flex;
  ${p => p.$ticks && css`
    &::before {
      content: '';
      position: absolute;
      left: 2px;
      right: 2px;
      top: 15px;
      height: 3px;
      background: repeating-linear-gradient(90deg, transparent 0 calc(10% - 1px), #8a8c8c calc(10% - 1px) 10%);
    }
  `}
`;

const Slider = styled.input<{ $fill: number }>`
  appearance: none;
  position: relative;
  width: 100%;
  height: 22px;
  &::-webkit-slider-runnable-track {
    height: 5px;
    border: 1px solid #000;
    background: linear-gradient(90deg, #16509c ${p => p.$fill}%, #0a0a0a ${p => p.$fill}%);
    border-top-color: ${p => (p.$fill ? '#3d3f3f' : '#000')};
  }
  &::-webkit-slider-thumb {
    appearance: none;
    width: 6px;
    height: 21px;
    margin-top: -9px;
    background: linear-gradient(90deg, #b0b2b2, #858787);
    border: 1px solid #333;
  }
`;

const CheckRow = styled.label`
  display: flex;
  align-items: center;
  gap: 7px;
  height: 21px;
  padding-left: 143px;
`;

const Check = styled.input`
  appearance: none;
  width: 13px;
  height: 14px;
  background: #111;
  border: 1px solid #2a2a2a;
  display: grid;
  &:checked::after {
    content: '';
    background: #e6e8e8;
    clip-path: polygon(5% 50%, 25% 45%, 38% 65%, 95% 0, 55% 100%, 35% 100%);
  }
`;

const Checks = styled.div`
  padding-bottom: 1px;
`;

const Cursor = styled.svg`
  position: absolute;
  left: 7px;
  top: -6px;
`;

const MiniMenu = styled.button`
  ${raised}
  width: 18px;
  height: 20px;
  display: grid;
  place-items: center;
`;

const ScrollTrack = styled.div`
  display: flex;
  flex-direction: column;
  background: #1e1f1f;
  border-right: 1px solid #000;
`;

const ScrollThumb = styled.div`
  flex: 206;
  display: grid;
  place-items: center;
  background: linear-gradient(90deg, #4f5151, #3c3d3d);
  border-bottom: 1px solid #5a5c5c;
`;

const ScrollGap = styled.div`
  flex: 38;
`;

const ScrollBtn = styled.button`
  flex: none;
  height: 18px;
  display: grid;
  place-items: center;
  border: 1px solid #000;
  background: #393a3a;
`;

const HSplit = styled.div`
  display: flex;
  align-items: center;
  justify-content: center;
  gap: 17px;
  background: #434545;
  border: 1px solid #6d7070;
  border-width: 1px 0 1px 1px;
`;

const RightColumn = styled.div`
  display: grid;
  grid-template-rows: minmax(0, 364fr) 7px minmax(0, 203fr);
  min-width: 0;
  min-height: 0;
`;

const SliderRow = ({ label, value, pct, bold, ticks }: { label: string; value: string; pct: number; bold?: boolean; ticks?: boolean }) => (
  <Row>
    <label htmlFor={label}>{label}</label>
    <Fields>
      <Field id={label} defaultValue={value} $w={93} $bold={bold} />
      <SliderBox $ticks={ticks}>
        <Slider type="range" aria-label={`${label} slider`} min={0} max={100} defaultValue={pct} $fill={pct} />
      </SliderBox>
    </Fields>
  </Row>
);

const Parameters = () => (
  <Pane>
    <TabStrip italic pad={8} tabs={[['lsystem1', 74], ['Take List', 75], ['Performance Monitor', 123]]} />
    <PathBar />
    <ParamHeader>
      <Tool icon="tree" label="Node menu" menu="down" w={22} size={18} h={22} />
      <NodeType htmlFor="node-name">L-System</NodeType>
      <NodeName id="node-name" defaultValue="lsystem1" />
      <Tool icon="gear" label="Settings" menu="down" size={15} />
      <Tool icon="hLetter" label="Houdini" menu="down" size={17} />
      <Tool icon="search" label="Search" size={18} />
      <Tool icon="info" label="Info" size={17} />
      <Tool icon="help" label="Help" size={17} />
    </ParamHeader>
    <ParamBody>
      <ParamScroll>
        <FolderTabs>
          <FolderTab type="button" $w={66} $on $bold>Geometry</FolderTab>
          <FolderTab type="button" $w={41}>Tube</FolderTab>
          <FolderTab type="button" $w={50} $bold>Values</FolderTab>
          <FolderTab type="button" $w={45}>Funcs</FolderTab>
          <FolderTab type="button" $w={44} $bold>Rules</FolderTab>
        </FolderTabs>
        <Folder>
          <Row>
            <label htmlFor="type">Type</label>
            <Fields>
              <DropDown id="type" label="Type" value="Skeleton" w={93} h={22} indent={11} />
            </Fields>
          </Row>
          <SliderRow label="Generations" value="1" pct={20} bold />
          <Row>
            <label htmlFor="tx">Start Position</label>
            <Fields>
              <FieldSlot><Field id="tx" defaultValue="0" /></FieldSlot>
              <FieldSlot>
                <Field aria-label="Start Position y" defaultValue="0" />
                <Cursor width="14" height="20" viewBox="0 0 14 20">
                  <path d="M1 1v15l4-4 3 7 3-1-3-7h5z" fill="#fff" stroke="#222" strokeWidth="0.800" />
                </Cursor>
              </FieldSlot>
              <FieldSlot><Field aria-label="Start Position z" defaultValue="0" /></FieldSlot>
            </Fields>
          </Row>
          <SliderRow label="Random Scale" value="0" pct={50} />
          <SliderRow label="Random Seed" value="0" pct={0} ticks />
          <Checks>
            <CheckRow><Check type="checkbox" defaultChecked />Continuous Angles</CheckRow>
            <CheckRow><Check type="checkbox" defaultChecked />Continuous Length</CheckRow>
            <CheckRow><Check type="checkbox" defaultChecked />Continuous Width</CheckRow>
            <CheckRow><Check type="checkbox" />Apply Color</CheckRow>
          </Checks>
          <Row $off>
            <label htmlFor="image">Image File</label>
            <Fields>
              <Field id="image" disabled $off />
              <MiniMenu type="button" disabled aria-label="File menu"><Tri $s={7} /></MiniMenu>
              <Tool icon="fileChooser" label="Choose file" size={18} />
            </Fields>
          </Row>
          <Row $off>
            <label htmlFor="uv">UV Increment</label>
            <Fields>
              <Field id="uv" disabled defaultValue="0.1" $off />
              <Field aria-label="UV Increment v" disabled defaultValue="0.1" $off />
            </Fields>
          </Row>
        </Folder>
      </ParamScroll>
      <ScrollTrack>
        <ScrollThumb><Dots $w={9} $h={12} $c="#000" /></ScrollThumb>
        <ScrollGap />
        <ScrollBtn type="button" aria-label="Scroll up"><Tri $dir="up" $s={6} $c="#555" /></ScrollBtn>
        <ScrollBtn type="button" aria-label="Scroll down"><Tri $s={6} /></ScrollBtn>
      </ScrollTrack>
    </ParamBody>
  </Pane>
);

/* ---------- network ---------- */

const NetBar = styled.div`
  display: flex;
  align-items: center;
  flex: none;
  height: 25px;
  background: linear-gradient(#393a3a, #303131);
  border-bottom: 1px solid #000;
`;

const EyeToggle = styled.div`
  display: flex;
  background: #8e9494;
`;

const NetCanvas = styled.div`
  position: relative;
  flex: 1;
  min-height: 0;
  overflow: hidden;
  background: #2f3030;
`;

const Watermark = styled.div`
  position: absolute;
  top: 13px;
  right: 11px;
  font-size: 23px;
  line-height: 32px;
  font-weight: 700;
  color: #4d4e4e;
`;

const NodeItem = styled.div`
  position: absolute;
  left: 247px;
  top: 13px;
  display: flex;
  align-items: center;
  gap: 6px;
  font-size: 16px;
  line-height: 24px;
  color: #c3c5c5;
`;

const NodeShape = () => (
  <svg width="87" height="84" viewBox="0 0 87 84">
    <circle cx="43.500" cy="42" r="41" fill="#46679a" />
    <circle cx="43.500" cy="42" r="28" fill="#9377c9" />
    <rect x="1.500" y="27.500" width="84" height="29" rx="6" fill="#c8cbcb" stroke="#b4a9ab" strokeWidth="2" />
    <rect x="3" y="29" width="81" height="26" rx="5" fill="#cdd0d0" stroke="#111" strokeWidth="1.500" />
    <path d="M74.500 30H80a3.500 3.500 0 0 1 3.300 4v17a3.500 3.500 0 0 1-3.500 3.300H72z" fill="#3aafdc" />
    <path d="M15 30l-3 25M26 30l-3 25M63 30l-2 25M74.500 30l-2.500 25" stroke="#8f9292" />
    {[18, 35, 52, 69].map(x => <circle key={x} cx={x} cy="22" r="4" fill="#b9bbbb" />)}
    <circle cx="43.500" cy="61" r="4" fill="#b9bbbb" />
    <g transform="translate(34 31) scale(1.050)">{tree('#44699c', 1.800)}</g>
  </svg>
);

const Network = () => (
  <Pane>
    <TabStrip italic pad={8} tabs={[['/obj/geo1', 77], ['Tree View', 77], ['Material Palette', 101], ['Asset Browser', 95]]} />
    <PathBar />
    <NetBar>
      <Grip type="button" aria-label="Collapse" $w={10}><Tri $dir="up" $s={6} $c="#000" /></Grip>
      <MenuList $gap={14} $pad={8}>
        {['Add', 'Edit', 'Go', 'View', 'Tools', 'Layout', 'Help'].map(m => <MenuLink key={m} type="button">{m}</MenuLink>)}
      </MenuList>
      <Spacer />
      <Tool icon="wrench" label="Tools" size={17} />
      <Tool icon="hierarchy" label="Tree" size={16} />
      <Tool icon="listView" label="List" size={16} />
      <Gap $w={17} />
      <Tool icon="palette" label="Palette" size={16} />
      <Tool icon="table" label="Table" size={16} />
      <Gap $w={16} />
      <Tool icon="layoutBoxes" label="Network box" size={16} />
      <Tool icon="note" label="Sticky note" size={17} />
      <Tool icon="image" label="Background image" size={17} />
      <Tool icon="basket" label="Assets" size={17} />
      <Gap $w={17} />
      <Tool icon="search" label="Find" size={17} />
      <EyeToggle><Tool icon="eye" label="Show" size={18} /></EyeToggle>
    </NetBar>
    <NetCanvas>
      <Watermark>Geometry</Watermark>
      <NodeItem><NodeShape />lsystem1</NodeItem>
    </NetCanvas>
  </Pane>
);

/* ---------- playbar ---------- */

const PlayBar = styled.footer`
  display: flex;
  flex: none;
  height: 72px;
  background: #2b2c2c;
  border-top: 1px solid #5d6060;
  border-bottom: 1px solid #000;
`;

const PlayGrip = styled(Grip)`
  align-items: flex-end;
  padding: 0 0 2px;
`;

const PlayControls = styled.div`
  flex: none;
  width: 225px;
  padding: 7px 0 0 5px;
  display: flex;
  flex-direction: column;
  gap: 7px;
`;

const BtnLine = styled.div`
  display: flex;
  align-items: center;
`;

const FrameField = styled.input`
  ${field}
  width: 47px;
  height: 27px;
  margin: 0 2px 0 3px;
`;

const TimeArea = styled.div`
  flex: 1;
  min-width: 0;
  display: flex;
  flex-direction: column;
`;

const Timeline = styled.div`
  position: relative;
  height: 44px;
  overflow: hidden;
`;

const RangeLine = styled.div`
  display: flex;
  align-items: center;
  gap: 3px;
`;

const RangeField = styled.input<{ $dim?: boolean }>`
  ${field}
  width: 42px;
  height: 22px;
  ${p => p.$dim && 'background: #212222;'}
`;

const RangeBar = styled.div`
  flex: 1;
  display: flex;
  align-items: center;
  &::before { content: ''; order: 1; flex: 1; height: 3px; background: #7b7d7d; }
  > :last-child { order: 2; }
`;

const RangeEnd = styled.span<{ $left?: boolean }>`
  width: 6px;
  height: 12px;
  background: #b3b5b5;
  clip-path: ${p => (p.$left ? 'polygon(0 50%, 100% 0, 100% 100%)' : 'polygon(0 0, 100% 50%, 0 100%)')};
`;

const KeyArea = styled.div`
  display: flex;
  align-items: center;
  width: 65px;
  flex: none;
  padding: 0 0 4px 4px;
`;

const KeyBtn = styled.button`
  width: 40px;
  height: 40px;
  border-radius: 20px;
  display: grid;
  place-items: center;
  background: #383939;
  border: 1px solid #1f2020;
`;

const KeyMenu = styled.button`
  ${raised}
  width: 15px;
  height: 20px;
  margin-left: -3px;
  display: grid;
  place-items: center;
`;

const ChannelArea = styled.div`
  flex: none;
  width: 187px;
  padding: 8px 6px 0 0;
  display: grid;
  grid-template-columns: 24px 1fr;
  grid-auto-rows: 24px;
  gap: 4px 5px;
  align-items: center;
`;

const KeysBtn = styled.button`
  ${raised}
  display: flex;
  align-items: center;
  justify-content: flex-end;
  gap: 24px;
  height: 24px;
  padding-right: 5px;
`;

const StatusBar = styled.div`
  display: flex;
  align-items: center;
  flex: none;
  height: 25px;
  padding: 0 0 2px 2px;
  background: #1a1b1b;
`;

const StatusTools = styled.div`
  display: flex;
  align-items: center;
  align-self: stretch;
  gap: 4px;
  padding-left: 1px;
  background: #2d2e2e;
`;

const px = (frame: number) => Math.round((frame - 1) * 3.18);

const Ruler = () => (
  <svg width="100%" height="43" viewBox="0 0 762 43" preserveAspectRatio="xMinYMin slice">
    <path d="M0 23.500h762" stroke="#a9acac" />
    {Array.from({ length: 40 }, (_, i) => (i + 1) * 6).map(f => (
      <path key={f} d={f % 24 ? `M${px(f)}.5 19v9` : `M${px(f)}.5 16v15`} stroke={f % 24 ? '#8a8c8c' : '#b9bbbb'} />
    ))}
    <g fill="#8f9292" fontSize="9" fontFamily="'Noto Sans CJK SC', sans-serif">
      {[24, 48, 72, 96, 120, 144, 168, 192, 216, 240].map(f => (
        <text key={f} x={px(f)} y="10">{f}</text>
      ))}
    </g>
    <path d="M1 23V2.500h24v16H6z" fill="#000" stroke="#eceeee" strokeWidth="1.500" />
    <text x="9" y="15" fill="#fff" fontSize="12" fontFamily="'Liberation Mono', monospace">1</text>
  </svg>
);

const Playbar = () => (
  <PlayBar>
    <PlayGrip type="button" aria-label="Collapse playbar" $w={10}><Tri $s={6} $c="#000" /></PlayGrip>
    <PlayControls>
      <BtnLine>
        <Tool icon="toStart" label="First frame" raisedLook w={27} h={28} />
        <Tool icon="playBack" label="Play backwards" raisedLook w={27} h={28} size={15} />
        <Tool icon="stop" label="Stop" raisedLook on w={27} h={28} size={18} />
        <Tool icon="play" label="Play" raisedLook w={27} h={28} size={15} />
        <Tool icon="toEnd" label="Last frame" raisedLook w={27} h={28} />
        <FrameField aria-label="Current frame" defaultValue="1" />
        <Tool icon="stepBack" label="Step back" raisedLook w={14} h={28} size={10} />
        <Tool icon="stepFwd" label="Step forward" raisedLook w={14} h={28} size={10} />
      </BtnLine>
      <BtnLine>
        <Tool icon="realtime" label="Real time" raisedLook w={27} h={24} size={18} />
        <Tool icon="audio" label="Audio" raisedLook w={27} h={24} size={19} />
        <Tool icon="loop" label="Loop" raisedLook menu="down" w={27} h={24} size={18} />
        <Tool icon="clock" label="Frame rate" raisedLook w={27} h={24} size={18} />
        <Gap $w={4} />
        <Tool icon="keyPrev" label="Previous key" raisedLook off w={23} h={24} size={12} />
        <Tool icon="keyNext" label="Next key" raisedLook off w={23} h={24} size={12} />
      </BtnLine>
    </PlayControls>
    <TimeArea>
      <Timeline><Ruler /></Timeline>
      <RangeLine>
        <RangeField aria-label="Global start" defaultValue="1" $dim />
        <RangeField aria-label="Range start" defaultValue="1" />
        <RangeBar><RangeEnd /><RangeEnd $left /></RangeBar>
        <RangeField aria-label="Range end" defaultValue="240" />
        <RangeField aria-label="Global end" defaultValue="240" $dim />
      </RangeLine>
    </TimeArea>
    <KeyArea>
      <KeyBtn type="button" aria-label="Set key"><Icon name="key" size={16} /></KeyBtn>
      <KeyMenu type="button" aria-label="Key menu"><Tri $s={6} /></KeyMenu>
    </KeyArea>
    <ChannelArea>
      <Tool icon="scope" label="Scope" raisedLook menu="right" w={23} size={17} />
      <KeysBtn type="button">0 keys, 0/0 channels<Tri $dir="up" $s={7} /></KeysBtn>
      <Tool icon="channels" label="Channels" raisedLook w={23} size={15} />
      <DropDown label="Channel scope" value="Key All Channels" w={151} h={21} indent={8} />
    </ChannelArea>
  </PlayBar>
);

/* ---------- app ---------- */

const snapTools: [string, string][] = [
  ['snapGrid', 'Grid snapping'], ['snapCurve', 'Curve snapping'], ['snapPoint', 'Point snapping'], ['snapMulti', 'Multi snapping'],
];
const handleTools: [string, string][] = [
  ['handleTransform', 'Move'], ['handleRotate', 'Rotate'], ['handleScale', 'Scale'], ['pose', 'Pose'],
];
const displayTools: [string, string, boolean, 'right' | 'down' | undefined][] = [
  ['refPlane', 'Reference plane', true, 'right'], ['constructPlane', 'Construction plane', false, 'right'],
  ['lock', 'Lock camera', false, undefined], ['noLight', 'No lighting', false, undefined],
  ['headlight', 'Headlight', false, 'right'], ['light', 'Normal lighting', true, 'right'],
  ['plusLight', 'High quality lighting', false, 'right'], ['envBulb', 'Shadows', false, 'right'],
  ['checker', 'Materials', true, 'right'], ['eyes', 'Visibility', false, 'down'], ['eyesPlay', 'Other objects', false, 'right'],
];
const markerTools: [string, string, number][] = [
  ['dot', 'Points', 20], ['normals', 'Point normals', 17], ['velocity', 'Point trails', 17], ['pointNum', 'Point numbers', 20],
  ['primNormal', 'Primitive normals', 17], ['primNum', 'Primitive numbers', 20],
];

export default function App() {
  return (
    <>
      <Global />
      <Defs />
      <Window>
        <TitleBar>
          <Icon name="logo" size={16} />
          <Gap $w={5} />
          <span>untitled.hip - Houdini FX 18.5.408</span>
          <Spacer />
          <WinBtn type="button" aria-label="Minimize"><WinGlyph d="M1 6.500h10" /></WinBtn>
          <WinBtn type="button" aria-label="Maximize"><WinGlyph d="M1.500 1.500h9v9h-9z" /></WinBtn>
          <WinBtn type="button" aria-label="Close"><WinGlyph d="M1 1l10 10M11 1L1 11" /></WinBtn>
        </TitleBar>
        <Bar $h={26}>
          <Grip type="button" aria-label="Collapse menu" $w={10}><Tri $dir="up" $s={6} $c="#000" /></Grip>
          <MenuList $gap={9} $pad={6}>
            {['File', 'Edit', 'Render', 'Assets', 'Windows', 'Help'].map(m => <MenuLink key={m} type="button">{m}</MenuLink>)}
          </MenuList>
          <ComboRow>
            <DropDown icon="layout" label="Desktop" value="Build" w={128} h={23} fs={12} flat />
            <DropDown icon="desktop" label="Radial menu" value="Main" w={128} h={23} fs={12} flat />
          </ComboRow>
          <Spacer />
          <DropDown icon="clapperBright" label="Take" value="Main" w={171} h={23} fs={12} flat />
          <Tool icon="help" label="Help" w={32} size={15} />
        </Bar>
        <Shelves>
          <Grip type="button" aria-label="Collapse shelf" $w={10}><Tri $dir="up" $s={6} $c="#000" /></Grip>
          <ShelfSet tabs={leftTabs} tools={leftTools} pad={17} stripes={16} />
          <ShelfGrip><Dots $w={6} $h={15} $c="#000" /></ShelfGrip>
          <ShelfSet tabs={rightTabs} tools={rightTools} pad={14} stripes={12} />
        </Shelves>
        <Main>
          <Splitter><Tri $dir="right" $s={5} /><Dots $w={6} $h={21} /><Tri $dir="right" $s={5} /></Splitter>
          <Pane>
            <TabStrip pad={8} tabs={[['Scene View', 83], ['Animation E…', 91], ['Render View', 88], ['Composite Vi…', 92], ['Motion FX Vi…', 88], ['Geometry Sp…', 92]]} />
            <PathBar>
              <ViewExtras>
                <Tool icon="box" label="Shading" menu="down" size={16} />
                <Tool icon="shapes" label="Geometry display" menu="down" size={18} />
                <ToolBtn type="button" aria-label="Color" $w={24} $menu="down"><Swatch /></ToolBtn>
              </ViewExtras>
            </PathBar>
            <ViewBar>
              <Grip type="button" aria-label="Collapse toolbar" $w={10}><Tri $dir="up" $s={6} $c="#000" /></Grip>
              <ViewTitle><Tool icon="camera" label="View menu" menu="down" size={18} />View</ViewTitle>
              <ToolRow $gap={8}>
                <Tool icon="rotateTool" label="Tumble" menu="down" size={17} />
                <Tool icon="moveTool" label="Pan" menu="down" size={17} />
                <Tool icon="zoomTool" label="Dolly" menu="down" size={18} />
              </ToolRow>
              <Gap $w={7} />
              <VSep />
              <Gap $w={5} />
              <Tool icon="camera" label="View" on w={21} size={14} />
              <Gap $w={3} />
              <Tool icon="boxZoom" label="Box zoom" size={16} />
              <Gap $w={4} />
              <VSep />
              <Gap $w={4} />
              <Tool icon="noEntry" label="Home" size={16} />
              <Spacer />
              <Tool icon="tiles" label="Viewport layout" menu="down" size={17} />
              <Tool icon="help" label="Help" size={17} />
              <Gap $w={2} />
            </ViewBar>
            <ViewArea>
              <SideBar>
                <SideHandle type="button" aria-label="Collapse left toolbar"><Tri $dir="left" $s={6} $c="#000" /></SideHandle>
                <SelectGroup>
                  <Tool icon="selObject" label="Objects" raisedLook menu="right" w={24} />
                  <Tool icon="selComponent" label="Components" raisedLook on menu="right" w={24} />
                  <Tool icon="selDynamic" label="Dynamics" raisedLook menu="right" w={24} />
                </SelectGroup>
                <HSep $m={1} />
                <ScrollUp type="button" aria-label="Scroll up"><Tri $dir="up" $s={8} /></ScrollUp>
                {handleTools.map(([i, l]) => <Tool key={i} icon={i} label={l} h={28} w={24} size={19} />)}
                <Tool icon="handles" label="Handles" menu="right" h={28} w={26} size={19} />
                <HSep $m={4} />
                {snapTools.map(([i, l]) => <Tool key={i} icon={i} label={l} menu="right" h={28} w={26} size={19} />)}
                <HSep $m={3} />
                <Tool icon="camera" label="View tool" on menu="right" w={27} h={28} size={22} />
                <ScrollDown type="button" aria-label="Scroll down" $h={16}><Tri $s={8} /></ScrollDown>
                <Tool icon="render" label="Render" menu="right" h={26} w={22} size={17} />
                <Tool icon="flipbook" label="Flipbook" menu="right" h={26} w={26} size={18} />
              </SideBar>
              <SceneView />
              <SideBar>
                <SideHandle type="button" aria-label="Collapse right toolbar" $end><Tri $dir="right" $s={6} $c="#000" /></SideHandle>
                <DisplayGroup>
                  {displayTools.map(([i, l, on, menu]) => <Tool key={i} icon={i} label={l} on={on} menu={menu} size={17} />)}
                </DisplayGroup>
                <HSep $m={2} />
                {markerTools.map(([i, l, s]) => <Tool key={i} icon={i} label={l} h={25} size={s} />)}
                <Tool icon="corner" label="Profiles" h={17} size={15} />
                <ScrollDown type="button" aria-label="Scroll down" $h={12}><Tri $s={8} /></ScrollDown>
              </SideBar>
            </ViewArea>
          </Pane>
          <Splitter><Tri $dir="left" $s={5} /><Dots $w={5} $h={21} /><Tri $dir="right" $s={5} /></Splitter>
          <RightColumn>
            <Parameters />
            <HSplit><Tri $dir="up" $s={5} /><Dots $w={21} $h={5} /><Tri $s={5} /></HSplit>
            <Network />
          </RightColumn>
        </Main>
        <Playbar />
        <StatusBar>
          Hold down Ctrl to snap to rounded values
          <Spacer />
          <StatusTools>
            <Tool icon="brain" label="Simulation" menu="right" size={18} />
            <Tool icon="refresh" label="Recook" size={16} />
            <DropDown label="Update mode" value="Auto Update" w={118} h={24} indent={12} />
          </StatusTools>
        </StatusBar>
      </Window>
    </>
  );
}
